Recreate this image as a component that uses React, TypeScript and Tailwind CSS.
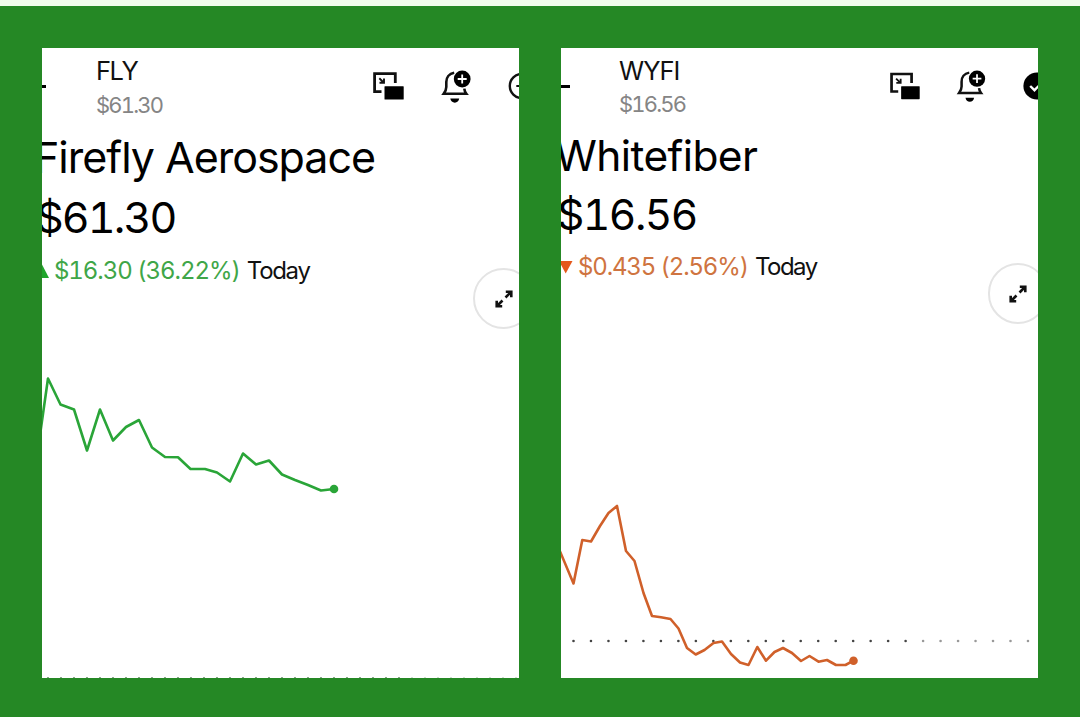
import React from "react";

type Point = [number, number];

const flyPoints: Point[] = [
  [40, 435], [48, 378.5], [60.5, 404.5], [74, 409.5], [87, 450.5], [100, 409.5],
  [113, 440.5], [126, 427], [139, 420], [152, 447.5], [165, 457], [178, 457.3],
  [190.5, 469], [205, 469], [217, 472.5], [230, 481.5], [243, 453.5], [256, 464.5],
  [269, 460.5], [282, 474.5], [295, 480], [308, 485], [321, 490.5], [334, 489],
];

const wyfiPoints: Point[] = [
  [559, 549], [573.5, 583.5], [582.3, 540], [591, 541.5], [600, 526], [608.5, 513],
  [617, 506], [626, 551], [634.5, 561], [643.5, 593], [652, 616], [661, 617.3],
  [670.5, 619], [678.5, 628.5], [687, 648], [695.7, 654.5], [704.5, 650],
  [713.5, 643], [722, 641.5], [731, 654], [740, 662.5], [748.5, 665], [757.3, 647],
  [766, 660.7], [774.5, 652], [783, 648], [792, 653], [801, 661], [809.5, 656],
  [818.5, 661.7], [827, 660], [836, 665], [845.5, 665], [853.5, 660.7],
];

const PipIcon = ({ className }: { className: string }) => (
  <svg viewBox="0 0 31 28" className={className}>
    <path d="M8.5 19.7H1.6V1.6H22.3V11" fill="none" stroke="#111" strokeWidth="2.8" />
    <path d="M6.3 6.3L10.3 10.2M11 6.5V10.8H6.5" fill="none" stroke="#111" strokeWidth="1.9" />
    <rect x="11.5" y="14.2" width="19.2" height="13.4" rx="0.6" fill="#000" />
  </svg>
);

const BellIcon = ({ className }: { className: string }) => (
  <svg viewBox="0 0 30 33" className={className}>
    <path
      d="M13.2 2.7C8 3.6 5.3 7.5 5.3 12V17C5.3 19.5 4.3 21.5 2.7 23.8H25.3C24.1 22.2 23.5 20.6 23.3 18.6"
      fill="none"
      stroke="#111"
      strokeWidth="2.6"
    />
    <path d="M9.3 28.6H18.2C17.8 31.3 16.1 32.7 13.8 32.7S9.7 31.3 9.3 28.6Z" fill="#000" />
    <circle cx="21.2" cy="9" r="8.4" fill="#000" />
    <path d="M21.2 4.5V13.5M16.7 9H25.7" stroke="#fff" strokeWidth="1.8" />
  </svg>
);

const PlusCircle = () => (
  <svg viewBox="0 0 28 28" className="w-7 h-7 shrink-0">
    <circle cx="14" cy="14" r="12.2" fill="none" stroke="#111" strokeWidth="2.4" />
    <path d="M8.3 14H19.7M14 8.3V19.7" stroke="#111" strokeWidth="2.2" />
  </svg>
);

const CheckCircle = () => (
  <svg viewBox="0 0 28 28" className="w-7 h-7 shrink-0">
    <circle cx="14" cy="14" r="13.6" fill="#000" />
    <path d="M7.2 14L11.5 18.2L20 9.6" fill="none" stroke="#fff" strokeWidth="2.4" />
  </svg>
);

const ExpandIcon = () => (
  <svg viewBox="0 0 20 20" className="w-5 h-5">
    <path
      d="M11.5 8.5L17 3M11.8 2.8H17.3V8.3M8.5 11.5L3 17M2.7 11.7V17.2H8.2"
      fill="none"
      stroke="#111"
      strokeWidth="2.6"
    />
  </svg>
);

const PriceLine = ({ points, color }: { points: Point[]; color: string }) => {
  const [x, y] = points[points.length - 1];
  return (
    <>
      <polyline
        points={points.map((p) => p.join(",")).join(" ")}
        fill="none"
        stroke={color}
        strokeWidth="2.6"
        strokeLinejoin="round"
      />
      <circle cx={x} cy={y} r="4.3" fill={color} />
    </>
  );
};

const FlyPanel = () => (
  <section className="relative flex flex-col w-[477px] h-[630px] bg-white overflow-hidden">
    <header className="flex h-[80px] shrink-0">
      <div className="w-[4px] h-[3px] mt-[37px] bg-black shrink-0" />
      <div className="ml-[50px] pt-[7px] flex flex-col items-start whitespace-nowrap">
        <div className="text-[25.5px] leading-[32px] tracking-[-1.6px] text-[#111]">FLY</div>
        <div className="mt-[2px] text-[22px] leading-[32px] tracking-[-1.8px] tabular-nums text-[#858585]">$61.30</div>
      </div>
      <div className="ml-auto mr-[-17px] flex shrink-0">
        <PipIcon className="w-[31px] h-[28px] mt-[24px]" />
        <BellIcon className="w-[30px] h-[33px] ml-[37px] mt-[22px]" />
        <div className="ml-[37px] mt-[24px]">
          <PlusCircle />
        </div>
      </div>
    </header>
    <h1 className="ml-[-8px] text-[43px] leading-[59px] tracking-[-1.02px] whitespace-nowrap">Firefly Aerospace</h1>
    <div className="ml-[-6px] text-[43px] leading-[60px] tracking-[-1.85px] tabular-nums whitespace-nowrap">$61.30</div>
    <div className="mt-[8px] flex items-center text-[24px] leading-[32px] whitespace-nowrap">
      <svg viewBox="0 0 7 14" className="w-[7px] h-[14px] mr-[5px] shrink-0">
        <path d="M0 0.5L7 14H0Z" fill="#1fa52b" />
      </svg>
      <span className="tracking-[-1.05px] tabular-nums text-[#3fa648]">$16.30 (36.22%)</span>
      <span className="ml-[7px] tracking-[-1.3px] text-[#111]">Today</span>
    </div>
    <svg viewBox="42 290 477 388" className="w-[477px] h-[388px] mt-auto shrink-0">
      <PriceLine points={flyPoints} color="#2aa538" />
      {Array.from({ length: 37 }, (_, i) => (
        <circle key={i} cx={48 + i * 13} cy="678" r="1.1" fill={i < 28 ? "#6f8f6f" : "#c3d6c3"} />
      ))}
    </svg>
    <button className="absolute left-[431px] top-[220px] w-[61px] h-[61px] rounded-full border-2 border-[#e4e4e4] bg-white flex items-center justify-center">
      <ExpandIcon />
    </button>
  </section>
);

const WyfiPanel = () => (
  <section className="relative flex flex-col w-[477px] h-[630px] bg-white overflow-hidden">
    <header className="flex h-[78px] shrink-0">
      <div className="w-[9px] h-[3px] mt-[37px] bg-black shrink-0" />
      <div className="ml-[49px] pt-[7px] flex flex-col items-start whitespace-nowrap">
        <div className="text-[25.5px] leading-[32px] tracking-[-1px] text-[#111]">WYFI</div>
        <div className="mt-px text-[22px] leading-[32px] tracking-[-1.8px] tabular-nums text-[#858585]">$16.56</div>
      </div>
      <div className="ml-auto mr-[-13px] flex shrink-0">
        <PipIcon className="w-[30px] h-[28px] mt-[24px]" />
        <BellIcon className="w-[30px] h-[32px] ml-[36px] mt-[22px]" />
        <div className="ml-[37px] mt-[24px]">
          <CheckCircle />
        </div>
      </div>
    </header>
    <h1 className="ml-[-6px] text-[42.5px] leading-[60px] tracking-[-0.6px] whitespace-nowrap">Whitefiber</h1>
    <div className="ml-[-4px] text-[42.5px] leading-[58px] tracking-[-1.5px] tabular-nums whitespace-nowrap">$16.56</div>
    <div className="mt-[7px] flex items-center text-[24px] leading-[32px] whitespace-nowrap">
      <svg viewBox="0 0 12 13" className="w-[12px] h-[13px] mr-[5px] shrink-0">
        <path d="M-2 0H11.5L4.7 12.5Z" fill="#e4581c" />
      </svg>
      <span className="tracking-[-1.15px] tabular-nums text-[#cf7440]">$0.435 (2.56%)</span>
      <span className="ml-[7px] tracking-[-1.5px] text-[#111]">Today</span>
    </div>
    <svg viewBox="561 290 477 388" className="w-[477px] h-[388px] mt-auto shrink-0">
      {Array.from({ length: 27 }, (_, i) => (
        <circle key={i} cx={573.5 + i * 17.48} cy="641" r="1.3" fill={i < 20 ? "#444" : "#999"} />
      ))}
      <PriceLine points={wyfiPoints} color="#d0602a" />
    </svg>
    <button className="absolute left-[427px] top-[215px] w-[60px] h-[61px] rounded-full border-2 border-[#e4e4e4] bg-white flex items-center justify-center">
      <ExpandIcon />
    </button>
  </section>
);

const App = () => {
  return (
    <div className="w-[1080px] h-[717px] overflow-hidden bg-[#258825] border-t-[6px] border-[#f1fdec] font-['Inter',sans-serif] text-black">
      <div className="flex gap-[42px] pt-[42px] pl-[42px]">
        <FlyPanel />
        <WyfiPanel />
      </div>
    </div>
  );
};

export default App;
